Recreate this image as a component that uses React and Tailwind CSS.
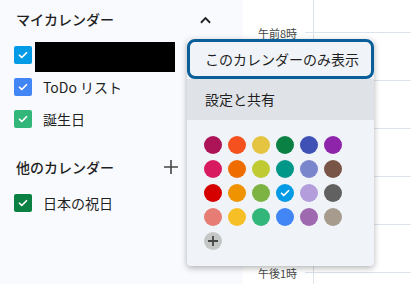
import React from "react";

const font = { fontFamily: '"Noto Sans CJK JP", "Noto Sans", Roboto, sans-serif' };

const palette = [
  ["#ad1457", "#f4511e", "#e4c441", "#0b8043", "#3f51b5", "#8e24aa"],
  ["#d81b60", "#ef6c00", "#c0ca33", "#009688", "#7986cb", "#795548"],
  ["#d50000", "#f09300", "#7cb342", "#039be5", "#b39ddb", "#616161"],
  ["#e67c73", "#f6bf26", "#33b679", "#4285f4", "#9e69af", "#a79b8e"],
];

function Check({ className = "w-3 h-3" }) {
  return (
    <svg viewBox="0 0 24 24" className={className} fill="none" stroke="white" strokeWidth="3.5" strokeLinecap="round" strokeLinejoin="round">
      <path d="M5 12.5l4.5 4.5L19 7.5" />
    </svg>
  );
}

function Box({ color }) {
  return (
    <div className="w-[18px] h-[18px] rounded-[2px] flex items-center justify-center shrink-0" style={{ backgroundColor: color }}>
      <Check />
    </div>
  );
}

const labels = ["午前8時", "", "", "", "", "午後1時"];

export default function App() {
  return (
    <div className="relative w-[411px] h-[284px] overflow-hidden flex text-[#1f1f1f]" style={font}>
      {/* Sidebar */}
      <div className="w-[243px] h-full bg-[#f8fafd] flex flex-col">
        <div className="h-[39px] flex items-center pl-4 pr-[32px] justify-between">
          <span className="text-[14px] font-medium">マイカレンダー</span>
          <svg viewBox="0 0 12 8" className="w-[11px] h-[8px]" fill="none" stroke="#1f1f1f" strokeWidth="2">
            <path d="M1 7l5-5 5 5" />
          </svg>
        </div>
        <div className="h-[32px] flex items-center pl-[14px]">
          <Box color="#039be5" />
          <div className="ml-[3px] mt-[4px] w-[140px] h-[30px] bg-black" />
        </div>
        <div className="h-[32px] flex items-center pl-[14px]">
          <Box color="#4285f4" />
          <span className="ml-[11px] text-[14px]">ToDo リスト</span>
        </div>
        <div className="h-[32px] flex items-center pl-[14px]">
          <Box color="#33b679" />
          <span className="ml-[11px] text-[14px]">誕生日</span>
        </div>
        <div className="h-[12px]" />
        <div className="h-[40px] flex items-center pl-4 pr-[65px] justify-between">
          <span className="text-[14px] font-medium">他のカレンダー</span>
          <svg viewBox="0 0 14 14" className="w-[14px] h-[14px]" fill="none" stroke="#444746" strokeWidth="1.6">
            <path d="M7 0v14M0 7h14" />
          </svg>
        </div>
        <div className="h-[32px] flex items-center pl-[14px]">
          <Box color="#0b8043" />
          <span className="ml-[11px] text-[14px]">日本の祝日</span>
        </div>
      </div>

      {/* Main grid */}
      <div className="flex-1 h-full bg-white flex">
        <div className="w-[62px] pt-[32px] flex flex-col">
          {labels.map((l, i) => (
            <div key={i} className="h-[48px] relative shrink-0">
              {l && (
                <span className="absolute right-2 -top-[7px] text-[11px] leading-[16px] text-[#444746]">{l}</span>
              )}
            </div>
          ))}
        </div>
        <div className="w-[8px] pt-[32px] flex flex-col">
          {labels.map((l, i) => (
            <div key={i} className="h-[48px] border-t border-[#dde3ea] shrink-0" />
          ))}
        </div>
        <div className="flex-1 border-l border-[#dde3ea] pt-[32px] flex flex-col">
          {labels.map((l, i) => (
            <div key={i} className="h-[48px] border-t border-[#dde3ea] shrink-0" />
          ))}
        </div>
      </div>

      {/* Popup menu */}
      <div className="absolute left-[187px] top-[39px] w-[187px] h-[227px] bg-[#f0f4f9] rounded-[4px] shadow-[0_2px_6px_rgba(0,0,0,0.3)] flex flex-col">
        <div className="h-[40px] border-[3px] border-[#0b5f99] rounded-[8px] flex items-center pl-[15px] text-[14px]">
          このカレンダーのみ表示
        </div>
        <div className="h-[41px] bg-[#dfe3e8] flex items-center pl-[18px] text-[14px]">
          設定と共有
        </div>
        <div className="pt-[16px] pl-[17px] flex flex-col gap-[6px]">
          {palette.map((row, i) => (
            <div key={i} className="flex gap-[6px]">
              {row.map((c) => (
                <div key={c} className="w-[18px] h-[18px] rounded-full flex items-center justify-center" style={{ backgroundColor: c }}>
                  {c === "#039be5" && <Check className="w-[12px] h-[12px]" />}
                </div>
              ))}
            </div>
          ))}
          <div className="w-[18px] h-[18px] rounded-full bg-[#c4c7c5] flex items-center justify-center">
            <svg viewBox="0 0 10 10" className="w-[10px] h-[10px]" fill="none" stroke="#444746" strokeWidth="1.8">
              <path d="M5 0v10M0 5h10" />
            </svg>
          </div>
        </div>
      </div>
    </div>
  );
}
